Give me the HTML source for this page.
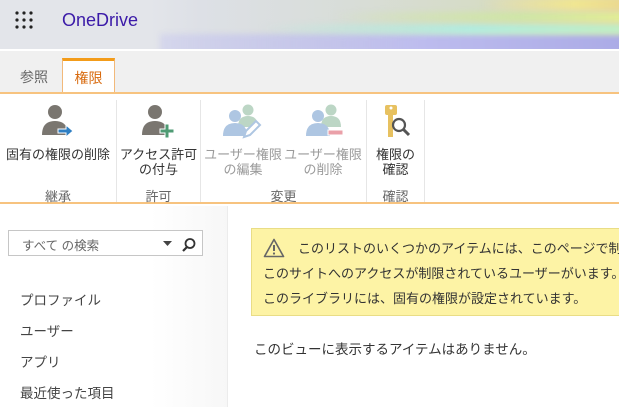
<!DOCTYPE html>
<html><head><meta charset="utf-8">
<style>
*{margin:0;padding:0;box-sizing:border-box}
html,body{width:619px;height:407px;overflow:hidden}
body{position:relative;background:#fff;font-family:"Liberation Sans","Noto Sans CJK JP",sans-serif;color:#444}
.hdr{position:absolute;left:0;top:0;width:619px;height:49px;background:linear-gradient(90deg,#e3e5ea 0,#e3e5ea 150px,#dde0e6 200px,#d8ddd8 350px,#d6dcc6 480px,#e2d7b0 619px);overflow:hidden}
.b{position:absolute;filter:blur(3px)}
.tabs{position:absolute;left:0;top:49px;width:619px;height:44px;background:#f0f0f0;border-top:2px solid #fff}
.tab{position:absolute;top:16px;font-size:14px;color:#666}
.tabA{position:absolute;left:62px;top:7px;width:53px;height:38px;background:#fff;border:1px solid #f2b97a;border-top:3px solid #f39c1a;border-bottom:none;color:#d86a0e;font-size:14px;text-align:center;padding-top:7px}
.rib{position:absolute;left:0;top:92px;width:619px;height:112px;background:#fff;border-top:2px solid #f7c37f;border-bottom:2px solid #f7c37f}
.sep{position:absolute;top:6px;width:1px;height:102px;background:#e6e6e6}
.lbl{position:absolute;font-size:13px;line-height:15px;text-align:center;color:#333;white-space:nowrap}
.dis{color:#9a9a9a}
.grp{position:absolute;top:92px;font-size:13px;color:#666;text-align:center}
.nav{position:absolute;left:0;top:206px;width:228px;height:201px;background:linear-gradient(90deg,#fff 0,#fff 150px,#f7f7f7 228px);border-right:1px solid #ececec}
.srch{position:absolute;left:8px;top:230px;width:195px;height:26px;border:1px solid #c6c6c6;background:#fff;font-size:12.5px;color:#666;padding:4px 0 0 13px}
.ni{position:absolute;left:20px;font-size:13.5px;color:#444}
.warn{position:absolute;left:251px;top:228px;width:368px;height:88px;background:#fdf3a5;border:1px solid #e9dd86;border-right:none;font-size:13px;color:#333;white-space:nowrap;line-height:25px;padding:7px 0 0 11px;overflow:hidden}
</style></head><body>
<div class="hdr">
<div class="b" style="left:160px;top:34px;width:520px;height:20px;background:linear-gradient(90deg,rgba(195,195,240,.4),#bdbcee 50%,#a6a6e4)"></div>
<div class="b" style="left:260px;top:24px;width:420px;height:10px;background:linear-gradient(90deg,rgba(180,235,230,0),#b2ecdf 50%,#c4f0bc)"></div>
<div class="b" style="left:330px;top:12px;width:320px;height:10px;background:linear-gradient(90deg,rgba(200,230,170,0),#cfe6a6 60%,#e6ef90)"></div>
<div class="b" style="left:480px;top:-2px;width:160px;height:12px;background:linear-gradient(90deg,rgba(240,230,150,0),#f0e690 60%,#e8d38e)"></div>
<svg style="position:absolute;left:15px;top:11px" width="20" height="20"><g fill="#222"><circle cx="2" cy="2" r="1.6"/><circle cx="9" cy="2" r="1.6"/><circle cx="16" cy="2" r="1.6"/><circle cx="2" cy="9" r="1.6"/><circle cx="9" cy="9" r="1.6"/><circle cx="16" cy="9" r="1.6"/><circle cx="2" cy="16" r="1.6"/><circle cx="9" cy="16" r="1.6"/><circle cx="16" cy="16" r="1.6"/></g></svg>
<div style="position:absolute;left:62px;top:10px;font-size:18px;color:#3b1aa8">OneDrive</div>
</div>
<div class="tabs"><div class="tab" style="left:20px">参照</div><div class="tabA">権限</div></div>
<div class="rib">
<div class="sep" style="left:116px"></div><div class="sep" style="left:200px"></div><div class="sep" style="left:366px"></div><div class="sep" style="left:424px"></div>
<svg style="position:absolute;left:40px;top:10px" width="36" height="36"><circle cx="15" cy="8" r="7" fill="#7a7670"/><path d="M2 31 Q2 17 15 17 Q28 17 28 31Z" fill="#7a7670"/><path d="M18 25h8v-4l7 6-7 6v-4h-8z" fill="#2f7fc3" stroke="#fff" stroke-width="1"/></svg>
<svg style="position:absolute;left:140px;top:10px" width="36" height="36"><circle cx="15" cy="8" r="7" fill="#7a7670"/><path d="M2 31 Q2 17 15 17 Q28 17 28 31Z" fill="#7a7670"/><path d="M25 20h4v5h5v4h-5v5h-4v-5h-5v-4h5z" fill="#4f9b74" stroke="#fff" stroke-width="1"/></svg>
<svg style="position:absolute;left:223px;top:10px" width="40" height="36"><circle cx="25" cy="6" r="5.5" fill="#bcd6c5"/><path d="M15 23 Q15 12 25 12 Q35 12 35 23Z" fill="#bcd6c5"/><circle cx="12" cy="12" r="6" fill="#aec6e2"/><path d="M0 32 Q0 19 12 19 Q24 19 24 32Z" fill="#aec6e2"/><path d="M21 33l2-6 10-10 4 4-10 10z" fill="#fff" stroke="#aec6e2" stroke-width="2"/></svg>
<svg style="position:absolute;left:306px;top:10px" width="40" height="36"><circle cx="25" cy="6" r="5.5" fill="#bcd6c5"/><path d="M15 23 Q15 12 25 12 Q35 12 35 23Z" fill="#bcd6c5"/><circle cx="12" cy="12" r="6" fill="#aec6e2"/><path d="M0 32 Q0 19 12 19 Q24 19 24 32Z" fill="#aec6e2"/><rect x="22" y="26" width="15" height="5" fill="#eaa0a8" stroke="#fff" stroke-width="1"/></svg>
<svg style="position:absolute;left:381px;top:10px" width="36" height="36"><rect x="4" y="1" width="12" height="10" rx="2" fill="#e7c160"/><rect x="7" y="10" width="5" height="23" fill="#e7c160"/><circle cx="10" cy="4" r="1.5" fill="#fff"/><circle cx="18" cy="21" r="6" fill="#fff" stroke="#555" stroke-width="2.2"/><path d="M22 25l6 6" stroke="#555" stroke-width="3"/></svg>
<div class="lbl" style="left:0;width:116px;top:53px">固有の権限の削除</div>
<div class="lbl" style="left:117px;width:83px;top:53px">アクセス許可<br>の付与</div>
<div class="lbl dis" style="left:203px;width:80px;top:53px">ユーザー権限<br>の編集</div>
<div class="lbl dis" style="left:283px;width:80px;top:53px">ユーザー権限<br>の削除</div>
<div class="lbl" style="left:367px;width:57px;top:53px">権限の<br>確認</div>
<div class="grp" style="left:0;width:116px">継承</div>
<div class="grp" style="left:117px;width:83px">許可</div>
<div class="grp" style="left:201px;width:165px">変更</div>
<div class="grp" style="left:367px;width:57px">確認</div>
</div>
<div class="nav"></div>
<div class="srch">すべて の検索
<svg style="position:absolute;left:154px;top:7px" width="36" height="14"><path d="M0 3h9l-4.5 5z" fill="#444"/><circle cx="27" cy="5.5" r="4.5" fill="none" stroke="#333" stroke-width="1.8"/><path d="M24 9l-4 4" stroke="#333" stroke-width="2.2"/></svg></div>
<div class="ni" style="top:289px">プロファイル</div>
<div class="ni" style="top:320px">ユーザー</div>
<div class="ni" style="top:351px">アプリ</div>
<div class="ni" style="top:382px">最近使った項目</div>
<div class="warn"><svg style="position:absolute;left:11px;top:9px" width="22" height="20"><path d="M11 1.5L20.5 18.5H1.5Z" fill="none" stroke="#666" stroke-width="1.6" stroke-linejoin="round"/><path d="M11 7v6" stroke="#666" stroke-width="2"/><circle cx="11" cy="15.5" r="1.1" fill="#666"/></svg>
<span style="margin-left:35px">このリストのいくつかのアイテムには、このページで制御できない</span><br>このサイトへのアクセスが制限されているユーザーがいます。このサイト<br>このライブラリには、固有の権限が設定されています。</div>
<div style="position:absolute;left:254px;top:338px;font-size:13.5px;color:#333">このビューに表示するアイテムはありません。</div>
</body></html>
